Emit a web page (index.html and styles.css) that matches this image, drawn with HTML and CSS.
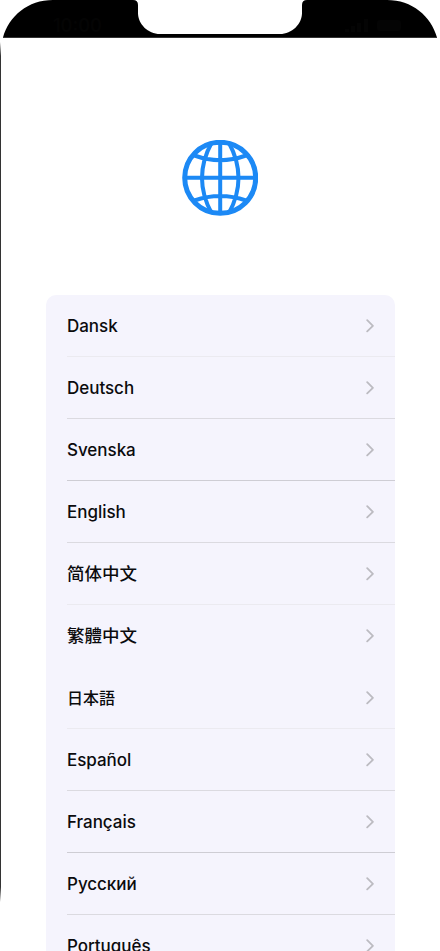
FILE: index.html
```html
<!DOCTYPE html>
<html lang="en">
<head>
<meta charset="utf-8">
<title>Language</title>
<link rel="stylesheet" href="styles.css">
</head>
<body>
<svg width="0" height="0" class="defs"><symbol id="chevron" viewBox="0 0 9 14"><path d="M1.2 1.2 6.9 6.8 1.2 12.400" fill="none" stroke="#bcbbc1" stroke-width="1.8" stroke-linecap="round" stroke-linejoin="round"/></symbol></svg>
<main class="screen">
  <header class="status">
    <svg class="bezel" viewBox="0 0 440 38" width="440" height="38">
      <path d="M3 37.5C9 16 28 0 53 0H133Q138 0 138 5V13C138 24 148 34 160 34H280C292 34 302 24 302 13V5Q302 0 307 0H387C412 0 431 16 437 37.5Z" fill="#000"/>
      <path d="M3 37.5H437" stroke="#333" stroke-width="1"/>
      <path d="M347 29v3M353 26v6M359 23v9M366 19v13" stroke="#040404" stroke-width="4"/>
      <rect x="377" y="20" width="24" height="11" rx="3" fill="#040404"/>
    </svg>
    <span class="time">10:00</span>
  </header>
  <svg class="globe" viewBox="0 0 76 76" width="76" height="76" fill="none" stroke="#1c89f5" stroke-width="4">
    <circle cx="38.200" cy="37.800" r="35.500" stroke-width="5"/>
    <path d="M38.200 2V74M2 37.800H74M29.500 3Q10.500 37.800 29.500 73M47 3Q66 37.800 47 73M12.500 15.500Q38.200 24.900 64 15.500M12.500 60.500Q38.200 51.500 64 60.500"/>
  </svg>
  <ul class="list">
    <li class="row faint"><span>Dansk</span><svg><use href="#chevron"/></svg></li>
    <li class="row"><span>Deutsch</span><svg><use href="#chevron"/></svg></li>
    <li class="row strong"><span>Svenska</span><svg><use href="#chevron"/></svg></li>
    <li class="row"><span>English</span><svg><use href="#chevron"/></svg></li>
    <li class="row faint cjk"><span lang="zh-Hans">简体中文</span><svg><use href="#chevron"/></svg></li>
    <li class="row plain cjk"><span lang="zh-Hant">繁體中文</span><svg><use href="#chevron"/></svg></li>
    <li class="row faint cjk ja"><span lang="ja">日本語</span><svg><use href="#chevron"/></svg></li>
    <li class="row"><span>Español</span><svg><use href="#chevron"/></svg></li>
    <li class="row strong"><span>Français</span><svg><use href="#chevron"/></svg></li>
    <li class="row"><span>Русский</span><svg><use href="#chevron"/></svg></li>
    <li class="row"><span>Português</span><svg><use href="#chevron"/></svg></li>
  </ul>
</main>
</body>
</html>
```
FILE: styles.css
```css
* { box-sizing: border-box; }
body { margin: 0; background: #fff; font-family: Inter, "Noto Sans CJK SC", sans-serif; }
.defs { position: absolute; }
.screen { position: relative; display: flex; flex-direction: column; align-items: center; width: 440px; height: 951px; overflow: hidden; }
.screen::before { content: ""; position: absolute; left: 0; top: 42px; width: 1px; height: 860px; background: linear-gradient(transparent, #333 14px, #333 845px, transparent); }
.status { position: relative; width: 440px; height: 38px; }
.bezel { display: block; }
.time { position: absolute; left: 53px; top: 15px; font-size: 18px; line-height: 22px; font-weight: 600; color: #040404; }
.globe { flex: none; margin-top: 102px; }
.list { flex: none; width: 349px; margin: 79px 0 0 1px; padding: 0 0 0 21px; list-style: none; background: #f5f4fd; border-radius: 10px 10px 0 0; }
.row { display: flex; align-items: center; justify-content: space-between; height: 62px; padding-right: 20px; border-bottom: 1px solid #dbdae0; color: #0b0b0d; font-size: 17px; line-height: 24px; font-weight: 500; letter-spacing: -0.03px; }
.row svg { width: 9px; height: 14px; }
.faint { border-color: #ebeaf0; }
.strong { border-color: #cecdd4; }
.plain { border-color: transparent; }
.cjk { font-size: 17.5px; font-family: "Noto Sans CJK SC", sans-serif; }
.cjk span { padding-bottom: 2px; }
.ja { font-size: 16px; font-family: "Noto Sans CJK JP", sans-serif; }
[lang="zh-Hant"] { font-family: "Noto Sans CJK TC", sans-serif; }
```
